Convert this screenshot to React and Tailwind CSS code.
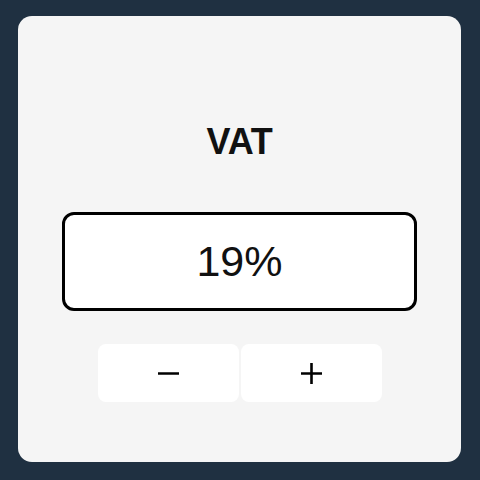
import { useState } from 'react';

const MinusIcon = () => (
  <svg width="21" height="21" viewBox="0 0 21 21" fill="none">
    <line x1="0.5" y1="10.5" x2="20.5" y2="10.5" stroke="#000" strokeWidth="2.6" strokeLinecap="round" />
  </svg>
);

const PlusIcon = () => (
  <svg width="21" height="21" viewBox="0 0 21 21" fill="none">
    <line x1="0.5" y1="10.5" x2="20.5" y2="10.5" stroke="#000" strokeWidth="2.6" strokeLinecap="round" />
    <line x1="10.5" y1="0.5" x2="10.5" y2="20.5" stroke="#000" strokeWidth="2.6" strokeLinecap="round" />
  </svg>
);

export default function App() {
  // Valor del IVA en porcentaje
  const [vat, setVat] = useState(19);

  return (
    <div
      className="w-[480px] h-[480px] bg-[#1f3041] pt-[16px] pl-[18px]"
      style={{ fontFamily: '"Liberation Sans", Arial, sans-serif' }}
    >
      <div className="w-[443px] h-[446px] bg-[#f5f5f5] rounded-[14px] px-[44px] pt-[106px] flex flex-col items-center">
        {/* Título */}
        <h1 className="text-[36px] leading-[40px] font-bold text-[#111] tracking-[-0.3px]">VAT</h1>

        {/* Valor actual */}
        <div className="mt-[50px] w-full h-[99px] bg-white border-[3px] border-black rounded-[12px] flex items-center justify-center">
          <span className="text-[43px] leading-none text-[#111]">{vat}%</span>
        </div>

        {/* Controles */}
        <div className="mt-[33px] flex gap-[2px]">
          <button
            onClick={() => setVat((v) => Math.max(0, v - 1))}
            className="w-[141px] h-[58px] bg-white rounded-[8px] flex items-center justify-center"
          >
            <MinusIcon />
          </button>
          <button
            onClick={() => setVat((v) => v + 1)}
            className="w-[141px] h-[58px] bg-white rounded-[8px] flex items-center justify-center"
          >
            <PlusIcon />
          </button>
        </div>
      </div>
    </div>
  );
}
